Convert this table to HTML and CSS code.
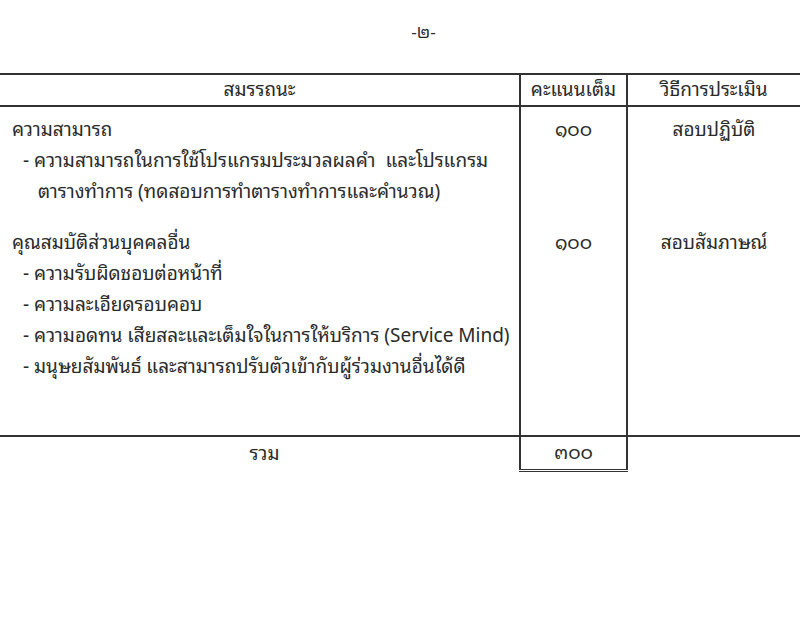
FILE: index.html
```html
<!DOCTYPE html>
<html lang="th">
<head>
<meta charset="utf-8">
<link rel="stylesheet" href="styles.css">
</head>
<body>
<div class="page">
  <div class="pageno">-๒-</div>
  <table class="grid">
    <colgroup>
      <col class="c1"><col class="c2"><col class="c3">
    </colgroup>
    <thead>
      <tr class="head">
        <th>สมรรถนะ</th>
        <th class="mid">คะแนนเต็ม</th>
        <th>วิธีการประเมิน</th>
      </tr>
    </thead>
    <tbody>
      <tr class="sec1">
        <td class="desc">
          <div class="title">ความสามารถ</div>
          <div class="item">- ความสามารถในการใช้โปรแกรมประมวลผลคำ&nbsp; และโปรแกรม<br>ตารางทำการ (ทดสอบการทำตารางทำการและคำนวณ)</div>
        </td>
        <td class="mid num">๑๐๐</td>
        <td class="method">สอบปฏิบัติ</td>
      </tr>
      <tr class="sec2">
        <td class="desc">
          <div class="title">คุณสมบัติส่วนบุคคลอื่น</div>
          <div class="item">- ความรับผิดชอบต่อหน้าที่</div>
          <div class="item">- ความละเอียดรอบคอบ</div>
          <div class="item">- ความอดทน เสียสละและเต็มใจในการให้บริการ (Service Mind)</div>
          <div class="item">- มนุษยสัมพันธ์ และสามารถปรับตัวเข้ากับผู้ร่วมงานอื่นได้ดี</div>
        </td>
        <td class="mid num">๑๐๐</td>
        <td class="method">สอบสัมภาษณ์</td>
      </tr>
      <tr class="total">
        <td class="sum">รวม</td>
        <td class="mid num totalnum">๓๐๐</td>
        <td></td>
      </tr>
    </tbody>
  </table>
</div>
</body>
</html>
```

FILE: styles.css
```css
html, body {
  margin: 0;
  padding: 0;
  background: #fff;
}
body {
  width: 800px;
  height: 620px;
  overflow: hidden;
  font-family: "Noto Sans Thai Looped", "Noto Sans Thai", "Noto Sans", "DejaVu Sans", sans-serif;
  color: #2a2a2a;
}
.page {
  padding-top: 20px;
}
.pageno {
  text-align: center;
  padding-left: 47px;
  font-size: 17px;
  line-height: 22px;
  height: 53px;
}
.grid {
  width: 800px;
  border-collapse: collapse;
  table-layout: fixed;
  font-size: 19px;
}
.c1 { width: 520px; }
.c2 { width: 107px; }
.c3 { width: 173px; }
.grid th {
  font-weight: normal;
  height: 26px;
  padding: 0 0 4px 0;
  line-height: 26px;
  border-top: 2px solid #333;
  border-bottom: 2px solid #333;
  text-align: center;
}
.grid td {
  padding: 0;
  vertical-align: top;
  line-height: 31px;
}
.mid {
  border-left: 2px solid #333;
  border-right: 2px solid #333;
  text-align: center;
}
.method {
  text-align: center;
}
.sec1 td {
  height: 100px;
  padding-top: 5px;
  padding-bottom: 13px;
}
.sec2 td {
  height: 190px;
  padding-top: 0;
  padding-bottom: 20px;
}
.desc .title {
  padding-left: 12px;
}
.desc .item {
  padding-left: 38px;
  text-indent: -15px;
}
.total td {
  border-top: 2px solid #333;
  height: 28px;
  line-height: 28px;
  padding-bottom: 4px;
  vertical-align: middle;
}
.total .sum {
  text-align: center;
  padding-left: 10px;
}
.totalnum {
  border-bottom: 3px double #333;
}
```
